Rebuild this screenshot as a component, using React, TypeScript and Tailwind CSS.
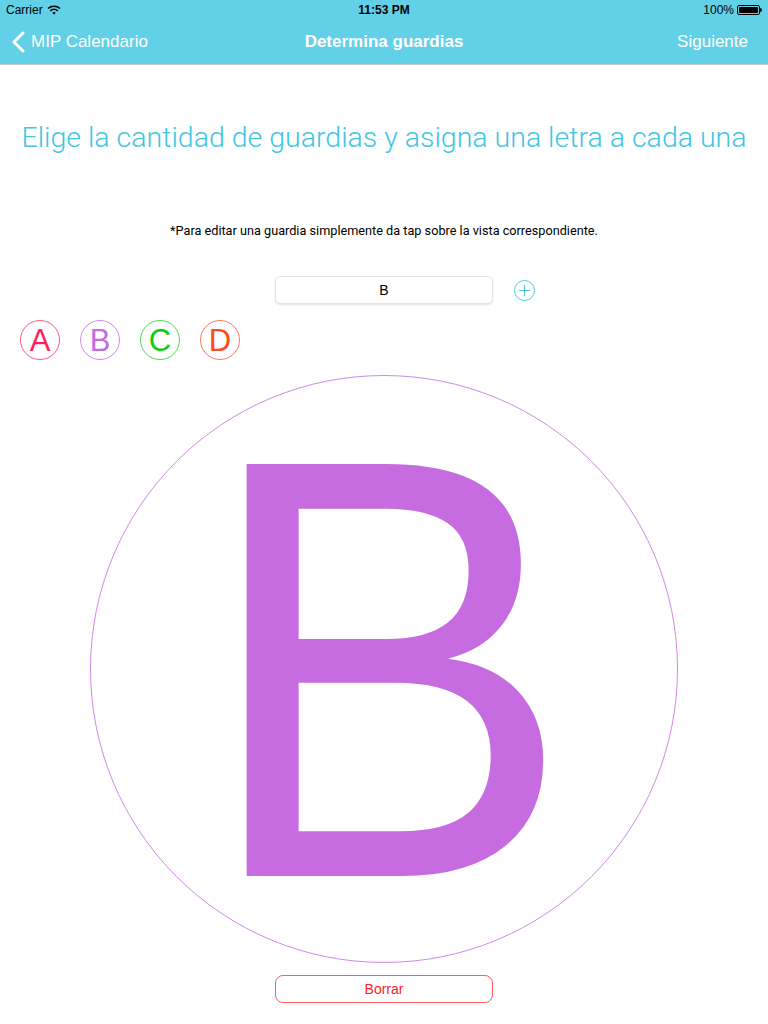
import React from 'react';

const letters = [
  { l: 'A', c: 'text-[#ff1f5a] border-[#ff5c7c]' },
  { l: 'B', c: 'text-[#c46cdf] border-[#cf8ae6]' },
  { l: 'C', c: 'text-[#0ccf0c] border-[#4ddc4d]' },
  { l: 'D', c: 'text-[#ff4a1c] border-[#ff7a5a]' },
];

export default function App() {
  return (
    <div className="w-[768px] h-[1024px] bg-white overflow-hidden font-['Liberation_Sans',sans-serif]">
      <div className="bg-[#62d0e7] border-b border-[#c9c9c9]">
        <div className="h-5 flex items-center justify-between px-[6px] text-[12px] text-black">
          <div className="flex items-center gap-1">
            <span>Carrier</span>
            <svg width="14" height="10" viewBox="0 0 14 10">
              <path d="M1 3.5 A9 9 0 0 1 13 3.5" stroke="black" strokeWidth="1.6" fill="none" />
              <path d="M3.2 5.8 A6 6 0 0 1 10.8 5.8" stroke="black" strokeWidth="1.6" fill="none" />
              <path d="M7 9.6 L5.2 7.8 A2.6 2.6 0 0 1 8.8 7.8 Z" fill="black" />
            </svg>
          </div>
          <span className="font-bold absolute left-1/2 -translate-x-1/2">11:53 PM</span>
          <div className="flex items-center gap-[3px]">
            <span>100%</span>
            <div className="flex items-center">
              <div className="w-[23px] h-[10px] border border-black rounded-[2px] p-[1px]">
                <div className="w-full h-full bg-black rounded-[1px]" />
              </div>
              <div className="w-[2px] h-[4px] bg-black rounded-r" />
            </div>
          </div>
        </div>
        <div className="h-11 flex items-center justify-between px-3 text-white text-[17px] relative">
          <div className="flex items-center gap-[6px]">
            <svg width="13" height="22" viewBox="0 0 13 22">
              <path d="M11 2 L2 11 L11 20" stroke="white" strokeWidth="3" fill="none" strokeLinecap="round" strokeLinejoin="round" />
            </svg>
            <span>MIP Calendario</span>
          </div>
          <span className="absolute left-1/2 -translate-x-1/2 font-bold">Determina guardias</span>
          <span className="pr-2">Siguiente</span>
        </div>
      </div>

      <h1 className="mt-[57px] text-center text-[28.5px] leading-8 font-light text-[#3fc6e3] font-['Roboto',sans-serif] whitespace-nowrap">
        Elige la cantidad de guardias y asigna una letra a cada una
      </h1>
      <p className="mt-[69px] text-center text-[12.7px] leading-4 text-black font-['Roboto',sans-serif]">
        *Para editar una guardia simplemente da tap sobre la vista correspondiente.
      </p>

      <div className="mt-[37px] flex justify-center relative">
        <div className="w-[218px] h-[28px] rounded-[5px] border border-[#e3e3e3] shadow-[0_1px_2px_rgba(0,0,0,0.12)] flex items-center justify-center text-[14px] text-black">
          B
        </div>
        <div className="absolute left-[514px] top-[4px] w-[21px] h-[21px] rounded-full border border-[#4cc8e6] flex items-center justify-center">
          <svg width="13" height="13" viewBox="0 0 13 13">
            <path d="M6.5 1 V12 M1 6.5 H12" stroke="#4cc8e6" strokeWidth="1.2" />
          </svg>
        </div>
      </div>

      <div className="mt-4 flex gap-5 pl-5">
        {letters.map((x) => (
          <div
            key={x.l}
            className={`w-10 h-10 rounded-full border flex items-center justify-center text-[31px] leading-none ${x.c}`}
          >
            {x.l}
          </div>
        ))}
      </div>

      <div className="mt-[15px] flex justify-center">
        <div className="w-[588px] h-[588px] rounded-full border border-[#cf8ae6] flex items-center justify-center">
          <div className="text-[599px] leading-[540px] h-[540px] text-[#c66ce0] scale-x-[0.93] translate-x-[3px]">B</div>
        </div>
      </div>

      <div className="mt-3 flex justify-center">
        <div className="w-[218px] h-[28px] rounded-[8px] border border-[#ff5c5c] flex items-center justify-center text-[14px] text-[#ff2020]">
          Borrar
        </div>
      </div>
    </div>
  );
}
